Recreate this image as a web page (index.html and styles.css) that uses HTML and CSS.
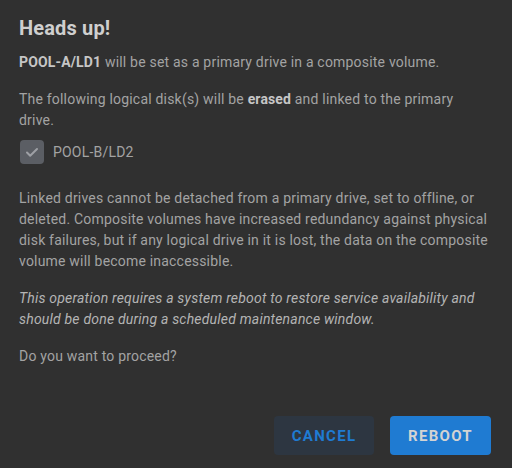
FILE: index.html
```html
<!DOCTYPE html>
<html>
<head>
<meta charset="utf-8">
<link rel="stylesheet" href="styles.css">
</head>
<body>
<div class="dialog">
  <h1 class="title">Heads up!</h1>
  <p class="para"><strong>POOL-A/LD1</strong> will be set as a primary drive in a composite volume.</p>
  <p class="para">The following logical disk(s) will be <strong>erased</strong> and linked to the primary drive.</p>
  <div class="check-row">
    <span class="checkbox">
      <svg viewBox="0 0 24 24" width="24" height="24"><path d="M7 12.5l3.2 3.2L17 9" fill="none" stroke="#9ea0a5" stroke-width="2" stroke-linecap="round" stroke-linejoin="round"/></svg>
    </span>
    <span class="check-label">POOL-B/LD2</span>
  </div>
  <p class="para">Linked drives cannot be detached from a primary drive, set to offline, or deleted. Composite volumes have increased redundancy against physical disk failures, but if any logical drive in it is lost, the data on the composite volume will become inaccessible.</p>
  <p class="para italic">This operation requires a system reboot to restore service availability and should be done during a scheduled maintenance window.</p>
  <p class="para">Do you want to proceed?</p>
  <div class="actions">
    <button class="btn btn-cancel">CANCEL</button>
    <button class="btn btn-primary">REBOOT</button>
  </div>
</div>
</body>
</html>
```
FILE: styles.css
```css
html, body {
  margin: 0;
  padding: 0;
  background: #303030;
}
body {
  font-family: Roboto, "Liberation Sans", sans-serif;
  width: 512px;
  height: 468px;
  overflow: hidden;
}
.dialog {
  padding: 14px 22px 13px 19px;
  display: flex;
  flex-direction: column;
  box-sizing: border-box;
  height: 468px;
}
.title {
  margin: 0 0 10px 0;
  font-size: 20px;
  font-weight: 700;
  line-height: 28px;
  letter-spacing: 0.15px;
  color: #cfcfcf;
}
.para {
  margin: 0 0 16px 0;
  font-size: 14px;
  line-height: 21px;
  letter-spacing: 0.2px;
  color: #a3a3a3;
}
.para strong {
  color: #c6c6c6;
  font-weight: 700;
  letter-spacing: 0.15px;
}
.italic {
  font-style: italic;
  color: #b4b4b4;
}
.check-row {
  display: flex;
  align-items: center;
  gap: 9px;
  margin: -7px 0 24px 1px;
}
.checkbox {
  width: 24px;
  height: 24px;
  border-radius: 4px;
  background: #5b5e64;
  display: flex;
}
.check-label {
  font-size: 14px;
  letter-spacing: 0.2px;
  color: #a3a3a3;
}
.actions {
  margin-top: auto;
  display: flex;
  justify-content: flex-end;
  gap: 16px;
  margin-right: -1px;
}
.btn {
  font-family: Roboto, "Liberation Sans", sans-serif;
  font-size: 15px;
  font-weight: 700;
  letter-spacing: 1.3px;
  height: 39px;
  border: none;
  border-radius: 4px;
  padding: 0;
}
.btn-cancel {
  width: 100px;
  background: #2d3641;
  color: #1f7bd2;
}
.btn-primary {
  width: 101px;
  background: #1f7bd2;
  color: #d3d3d3;
}
```
